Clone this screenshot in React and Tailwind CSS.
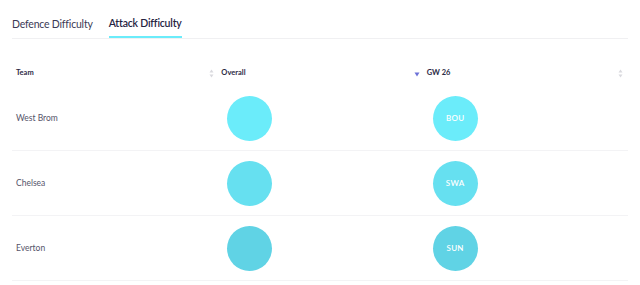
import React from "react";

const rows = [
  { team: "West Brom", overall: "#6becfa", gw: "#6becfa", opp: "BOU" },
  { team: "Chelsea", overall: "#66e0f0", gw: "#66e0f0", opp: "SWA" },
  { team: "Everton", overall: "#60d3e5", gw: "#60d3e5", opp: "SUN" },
];

function SortIcon() {
  return (
    <svg width="5" height="9" viewBox="0 0 5 9" className="shrink-0">
      <path d="M2.5 0.5 L4.5 3.5 H0.5 Z" fill="#d9d9de" />
      <path d="M2.5 8.5 L4.5 5.5 H0.5 Z" fill="#d9d9de" />
    </svg>
  );
}

function ArrowDown() {
  return (
    <svg width="6" height="5" viewBox="0 0 6 5" className="shrink-0 mt-[3px]">
      <path d="M0.5 0.5 H5.5 L3 4.5 Z" fill="#6d72d8" />
    </svg>
  );
}

function Circle({ color, label }) {
  return (
    <div
      className="w-[45px] h-[45px] rounded-full flex items-center justify-center text-white text-[8px] font-semibold tracking-[0.3px]"
      style={{ backgroundColor: color }}
    >
      {label}
    </div>
  );
}

export default function App() {
  return (
    <div className="w-[640px] h-[285px] bg-white overflow-hidden font-['Lato',sans-serif]">
      <div className="mx-3">
        {/* tabs */}
        <div className="flex h-[39px] border-b border-[#f0f0f2] gap-[16px]">
          <button className="h-full pt-[9px] text-[10.5px] leading-[14px] text-[#3b3a55] tracking-[-0.2px]">
            Defence Difficulty
          </button>
          <button className="h-full pt-[9px] text-[10.5px] leading-[14px] font-semibold text-[#25233f] tracking-[-0.2px] border-b-2 border-[#6becfa] -mb-px">
            Attack Difficulty
          </button>
        </div>

        {/* table header */}
        <div className="grid grid-cols-3 h-[47px] pt-[28px] items-start">
          <div className="flex items-center justify-between pl-1 pr-[3px] h-[12px]">
            <span className="text-[7.5px] font-bold text-[#2b2a45]">Team</span>
            <SortIcon />
          </div>
          <div className="flex items-center justify-between pl-1 pr-[3px] h-[12px]">
            <span className="text-[7.5px] font-bold text-[#2b2a45]">Overall</span>
            <ArrowDown />
          </div>
          <div className="flex items-center justify-between pl-1 pr-[5px] h-[12px]">
            <span className="text-[7.5px] font-bold text-[#2b2a45]">GW 26</span>
            <SortIcon />
          </div>
        </div>

        {/* rows */}
        {rows.map((r) => (
          <div
            key={r.team}
            className="grid grid-cols-3 items-center h-[65px] border-b border-[#f3f3f5]"
          >
            <div className="pl-1 text-[8.5px] text-[#55546a]">{r.team}</div>
            <div className="pl-[10px]">
              <Circle color={r.overall} />
            </div>
            <div className="pl-[10px]">
              <Circle color={r.gw} label={r.opp} />
            </div>
          </div>
        ))}
      </div>
    </div>
  );
}
